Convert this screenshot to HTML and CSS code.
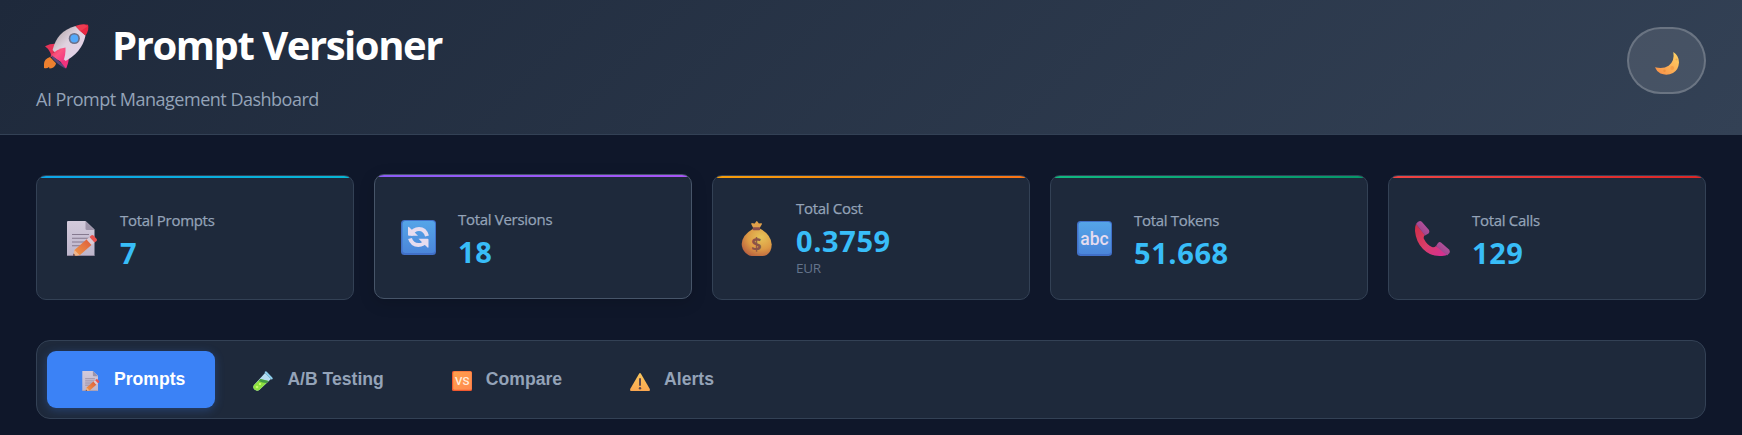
FILE: index.html
```html
<!DOCTYPE html>
<html lang="en">
<head>
<meta charset="utf-8">
<title>Prompt Versioner</title>
<link rel="stylesheet" href="styles.css">
</head>
<body>
<svg class="defs" width="0" height="0" aria-hidden="true">
  <defs>
    <linearGradient id="paper" x1="0" y1="0" x2="0" y2="1"><stop offset="0" stop-color="#d3cadb"/><stop offset="1" stop-color="#bdb5cb"/></linearGradient>
    <linearGradient id="pencil" x1="0" y1="1" x2="1" y2="0"><stop offset="0" stop-color="#f09a48"/><stop offset="1" stop-color="#dd5a3c"/></linearGradient>
    <linearGradient id="blue" x1="0" y1="0" x2="0" y2="1"><stop offset="0" stop-color="#55a5e8"/><stop offset="1" stop-color="#4b86da"/></linearGradient>
    <linearGradient id="orange" x1="0" y1="0" x2="1" y2="1"><stop offset="0" stop-color="#ffa04c"/><stop offset="1" stop-color="#ff8a50"/></linearGradient>
    <radialGradient id="bag" cx=".65" cy=".3" r=".75"><stop offset="0" stop-color="#e6c458"/><stop offset=".6" stop-color="#dd9a45"/><stop offset="1" stop-color="#bd6640"/></radialGradient>
    <linearGradient id="phone" x1="0" y1="0" x2="1" y2="1"><stop offset="0" stop-color="#cf2c45"/><stop offset=".5" stop-color="#d83e69"/><stop offset="1" stop-color="#d52c9a"/></linearGradient>
    <linearGradient id="cap" x1="0" y1="1" x2="1" y2="0"><stop offset="0" stop-color="#8f3a80"/><stop offset="1" stop-color="#c05aa6"/></linearGradient>
    <linearGradient id="moon" x1="1" y1="0" x2="0" y2="1"><stop offset="0" stop-color="#ffd767"/><stop offset="1" stop-color="#f98b45"/></linearGradient>
    <linearGradient id="hull" x1="0" y1="0" x2="1" y2="1"><stop offset="0.1" stop-color="#b3a6aa"/><stop offset=".45" stop-color="#dfd2df"/><stop offset="1" stop-color="#e6d3ee"/></linearGradient>
    <linearGradient id="fin" x1="0" y1="0" x2="1" y2="1"><stop offset="0" stop-color="#e92e50"/><stop offset=".45" stop-color="#fb5583"/><stop offset="1" stop-color="#ef2f83"/></linearGradient>
    <linearGradient id="warn" x1="0" y1="0" x2="0" y2="1"><stop offset="0" stop-color="#fbc75c"/><stop offset="1" stop-color="#f9a650"/></linearGradient>
    <symbol id="memo" viewBox="0 0 35 35">
      <g transform="translate(3 0)">
      <path d="M2 0h17.500l9 8.500V35H2q-1 0-1-1V1q0-1 1-1z" fill="url(#paper)"/>
      <path d="M19.500 0L28.500 9h-7.500q-1.500 0-1.500-1.500z" fill="#9d93a9"/>
      <path d="M6 13.500h17M6 17.300h17M6 21h14M6 24.800h9" stroke="#85798f" stroke-width="1.100"/>
      <path d="M1 34.500h27" stroke="#93889f" stroke-width="1"/>
      <path d="M8.500 29L21 18l5 5.500L14 34l-6 1z" fill="url(#pencil)"/>
      <path d="M8.500 29l5 5L7 35z" fill="#efb58b"/><path d="M7.500 32.500l2 2L7 35z" fill="#583c4b"/>
      <path d="M20.500 18.500l3-2.500 5 5.500-3 2.500z" fill="#dccbd5"/>
      <path d="M23.500 16l2-1.700q1-.8 2 .2l3.200 3.500q.8 1-.1 1.900l-2.100 1.700z" fill="#e9534f"/>
      </g>
    </symbol>
  </defs>
</svg>

<header class="header">
  <div class="brand">
    <h1 class="brand-title">
      <svg class="brand-icon" viewBox="0 0 45 45">
        <path d="M6 33q-6 2-6 7v4q3 .8 5-1l.5 1.500 2-.3q4-1.500 4.500-5z" fill="#ed802f"/>
        <path d="M1 22.300q6-3 12-2.300l-5 13-1.500 0q1-2 0-4-1.500-4-5.500-6.700z" fill="#e63358"/>
        <path d="M19 38l5.500-6q1 5-2.500 12.500-1.500-3-4-6z" fill="#f3327f"/>
        <path d="M8.600 26Q13 7 31.500 2l10 9.500Q38 29 19.500 38z" fill="url(#hull)"/>
        <path d="M31.500 2Q38-.8 44 .8 45.500 6 41.500 11.500 36 8 31.500 2z" fill="#eb2743"/>
        <path d="M31.500 2q4-2 9-1.500l3 2-7 4.500z" fill="#f4636c" opacity=".35"/>
        <circle cx="30.300" cy="14.500" r="5.600" fill="#6d7089"/><circle cx="30.300" cy="14.500" r="3.900" fill="#55a9fa"/>
        <path d="M21.500 23.500q.5 8-3 15.500L7 31.500q5-6.500 14.500-8z" fill="url(#fin)"/>
        <path d="M7.500 31l14 11.500-.3 2Q13 40 8 34z" fill="#5a467c"/>
        <path d="M17 38.500l3-3 3.500 3-1.500 6z" fill="#f1337d"/>
      </svg>
      <span class="brand-name">Prompt Versioner</span>
    </h1>
    <p class="brand-sub">AI Prompt Management Dashboard</p>
  </div>
  <button class="theme-toggle" type="button" aria-label="Toggle theme">
    <svg class="theme-icon" viewBox="0 0 24 24">
      <path d="M18.300 0Q24 3.500 24 10.500 23.500 18 18 21 12 24 5.500 21.500 1.500 19.500 0 15.200q8.300 2 13.600-1.500Q20 9 18.300 0z" fill="url(#moon)"/>
      <circle cx="17.200" cy="16" r="1.900" fill="#f4a049"/><circle cx="9.500" cy="18.700" r="1.200" fill="#ee923f"/><circle cx="21.500" cy="7.500" r="1" fill="#efad4d"/>
    </svg>
  </button>
</header>

<main class="main">
  <section class="stats">
    <article class="card card-prompts">
      <svg class="card-icon"><use href="#memo"/></svg>
      <div class="card-body"><div class="label">Total Prompts</div><div class="value">7</div></div>
    </article>
    <article class="card card-versions">
      <svg class="card-icon" viewBox="0 0 35 35">
        <rect width="35" height="35" rx="3.500" fill="#4170c8"/><rect x="1.500" y="1" width="32.500" height="32" rx="3" fill="url(#blue)"/>
        <path d="M9.500 15q3-6 8.500-6 6 0 8 7" fill="none" stroke="#e6dcef" stroke-width="4"/>
        <path d="M7 7.500q0-1 1-.5l9 8.700H8q-1 0-1-1z" fill="#e6dcef"/>
        <path d="M9 18.500q2 6.500 8.500 6.500 5 0 8-4.500" fill="none" stroke="#e6dcef" stroke-width="4"/>
        <path d="M27.500 27q0 1-1 .5l-9-8.800h9q1 0 1 1z" fill="#e6dcef"/>
      </svg>
      <div class="card-body"><div class="label">Total Versions</div><div class="value">18</div></div>
    </article>
    <article class="card card-cost">
      <svg class="card-icon" viewBox="-2.700 0 35 35">
        <path d="M11 8h8q10.500 6 11 15.500 0 7-5 10.500-2 1-4 1H10q-3 0-6-3-4-4-4-9Q.5 14 11 8z" fill="url(#bag)"/>
        <path d="M11.500 7L9.500 3q0-1.200 1.500-.8l2 .3 1.500-2q.6-.8 1.200 0l1.500 2 2-.3q1.500-.3 1 1L18 7z" fill="#e0a04a"/>
        <rect x="11" y="6.300" width="7.500" height="3" rx="1" fill="#8b4d4d"/>
        <text x="14.800" y="29.700" text-anchor="middle" class="bag-mark">$</text>
      </svg>
      <div class="card-body card-body-unit"><div class="label">Total Cost</div><div class="value">0.3759</div><div class="unit">EUR</div></div>
    </article>
    <article class="card card-tokens">
      <svg class="card-icon" viewBox="0 0 35 35">
        <rect width="35" height="35" rx="3.500" fill="#4170c8"/><rect x="1.500" y="1" width="32.500" height="32" rx="3" fill="url(#blue)"/>
        <text x="17.500" y="23.500" text-anchor="middle" class="abc-mark">abc</text>
      </svg>
      <div class="card-body"><div class="label">Total Tokens</div><div class="value">51.668</div></div>
    </article>
    <article class="card card-calls">
      <svg class="card-icon" viewBox="0 0 35 35">
        <path d="M1 3l9 11q-2 2-1 4 3 6 8 8 2 1 4-1l12 8q-2 2-6 2-11 1-19-7Q1 21 0 10 0 5 1 3z" fill="url(#phone)"/>
        <path d="M1 3q2-3 4-3 1 0 2 1l7 8q1 2-.5 3.500L10 14.500z" fill="url(#cap)"/>
        <path d="M21 25l2-3q1.500-1.500 3-.5l8 7q1.500 1.500.5 3.500L32 34.500z" fill="url(#cap)"/>
      </svg>
      <div class="card-body"><div class="label">Total Calls</div><div class="value">129</div></div>
    </article>
  </section>

  <nav class="tabs">
    <button class="tab tab-active" type="button"><svg class="tab-icon"><use href="#memo"/></svg><span>Prompts</span></button>
    <button class="tab" type="button">
      <svg class="tab-icon" viewBox="0 0 20 20">
        <path d="M12 2l6 6L6.500 18.800q-2.500 2-5-.2-2.500-2.500 0-5z" fill="#b6dcf0"/>
        <path d="M7.500 8l8 2L6.500 18.800q-2.500 2-5-.2-2.500-2.500 0-5z" fill="#8ee03f"/>
        <path d="M7.500 8l8 2-2 2q-4 0-8-2z" fill="#439a43"/>
        <path d="M11.800.8q1.200-1 2 0l5.500 5.600q1 1 0 1.800-.8.500-1.500-.2l-6-6z" fill="#8fd0ee"/>
        <circle cx="7" cy="13" r="1.100" fill="#d6ff7d"/><circle cx="4" cy="16" r="1.300" fill="#c3f76b"/>
      </svg><span>A/B Testing</span></button>
    <button class="tab" type="button">
      <svg class="tab-icon" viewBox="0 0 20 20"><rect width="20" height="20" rx="1.500" fill="#f2592f"/><rect x="1.200" y=".4" width="18.500" height="18.400" rx="1.500" fill="url(#orange)"/><text x="10.200" y="14" text-anchor="middle" class="vs-mark">VS</text></svg><span>Compare</span></button>
    <button class="tab" type="button">
      <svg class="tab-icon" viewBox="0 0 20 20"><path d="M9.200 2.500q.8-1 1.600 0l9 15.500q.7 2-.8 2H1q-1.500 0-.8-2z" fill="url(#warn)"/><path d="M10 8v6" stroke="#5c4850" stroke-width="2" stroke-linecap="round"/><circle cx="10" cy="17.200" r="1.200" fill="#5c4850"/></svg><span>Alerts</span></button>
  </nav>
</main>
</body>
</html>
```

FILE: styles.css
```css
* { box-sizing: border-box; }
body {
  margin: 0;
  height: 435px;
  overflow: hidden;
  background: #0f172a;
  font-family: "Open Sans", "Noto Sans", sans-serif;
  color: #f8fafc;
}
.defs { display: block; }
svg { overflow: visible; }

.header {
  display: flex;
  justify-content: space-between;
  align-items: flex-start;
  height: 135px;
  padding: 0 36px;
  border-bottom: 1px solid #334155;
  background: linear-gradient(135deg, #1e293b 0%, #334155 100%);
}
.brand { padding-top: 17px; }
.brand-title {
  display: flex;
  align-items: center;
  gap: 23px;
  margin: 0;
  padding-left: 8px;
  font-size: 40px;
  line-height: 56px;
  font-weight: 700;
  color: #fff;
}
.brand-icon { width: 45px; height: 45px; margin-top: 3px; }
.brand-name { letter-spacing: -1.45px; }
.brand-sub {
  margin: 13px 0 0;
  font-size: 18px;
  line-height: 26px;
  letter-spacing: -0.5px;
  color: #94a3b8;
}
.theme-toggle {
  display: flex;
  align-items: center;
  justify-content: center;
  width: 79px;
  height: 67px;
  margin-top: 27px;
  padding: 7px 0 0;
  border: 2px solid rgba(255, 255, 255, 0.2);
  border-radius: 34px;
  background: rgba(255, 255, 255, 0.1);
}
.theme-icon { width: 24px; height: 24px; }

.main { padding: 40px 36px 0; }
.stats { display: grid; grid-template-columns: repeat(5, 1fr); gap: 20px; }
.card {
  display: flex;
  align-items: center;
  gap: 22px;
  height: 125px;
  padding: 0 26px;
  border: 1px solid #334155;
  border-radius: 10px;
  background-color: #1e293b;
  background-repeat: no-repeat;
  background-size: 100% 2px;
}
.card-prompts { background-image: linear-gradient(90deg, #0ea5e9, #06b6d4); }
.card-versions {
  background-image: linear-gradient(90deg, #8b5cf6, #a855f7);
  border-color: #475569;
  box-shadow: 0 4px 16px rgba(0, 0, 0, 0.15);
  transform: translateY(-1px);
}
.card-cost { background-image: linear-gradient(90deg, #f59e0b, #f97316); }
.card-tokens { background-image: linear-gradient(90deg, #10b981, #059669); }
.card-calls { background-image: linear-gradient(90deg, #ef4444, #dc2626); }
.card-icon { flex: none; width: 35px; height: 35px; margin-top: 2px; }
.card-body { padding-top: 6px; white-space: nowrap; }
.card-body-unit { padding-top: 0; }
.label {
  font-size: 15px;
  line-height: 22px;
  font-weight: 500;
  letter-spacing: -0.3px;
  color: #94a3b8;
  -webkit-text-stroke: 0.25px #94a3b8;
}
.value {
  margin-top: 2px;
  font-size: 29px;
  line-height: 40px;
  font-weight: 700;
  letter-spacing: 0.6px;
  color: #38bdf8;
}
.unit { margin-top: -3px; font-size: 13.5px; line-height: 20px; letter-spacing: -0.3px; color: #64748b; }
.bag-mark { font: 700 18px "Open Sans", sans-serif; fill: #8b5347; }
.abc-mark { font: 500 17.5px Roboto, sans-serif; fill: #e6dcef; }
.vs-mark { font: 500 11.5px Roboto, sans-serif; fill: #ffeede; }

.tabs {
  display: flex;
  gap: 5px;
  height: 79px;
  margin-top: 40px;
  padding: 10px;
  border: 1px solid #334155;
  border-radius: 14px;
  background: #1e293b;
}
.tab {
  display: flex;
  align-items: center;
  gap: 14px;
  padding: 0 30px 2px 33px;
  border: 0;
  border-radius: 9px;
  background: transparent;
  font: 700 17.6px/20px "Liberation Sans", Arial, sans-serif;
  color: #94a3b8;
}
.tab-active { background: #3b82f6; color: #fff; box-shadow: 0 2px 10px rgba(59, 130, 246, 0.3); }
.tab-icon { width: 20px; height: 20px; margin-top: 4px; }
```
